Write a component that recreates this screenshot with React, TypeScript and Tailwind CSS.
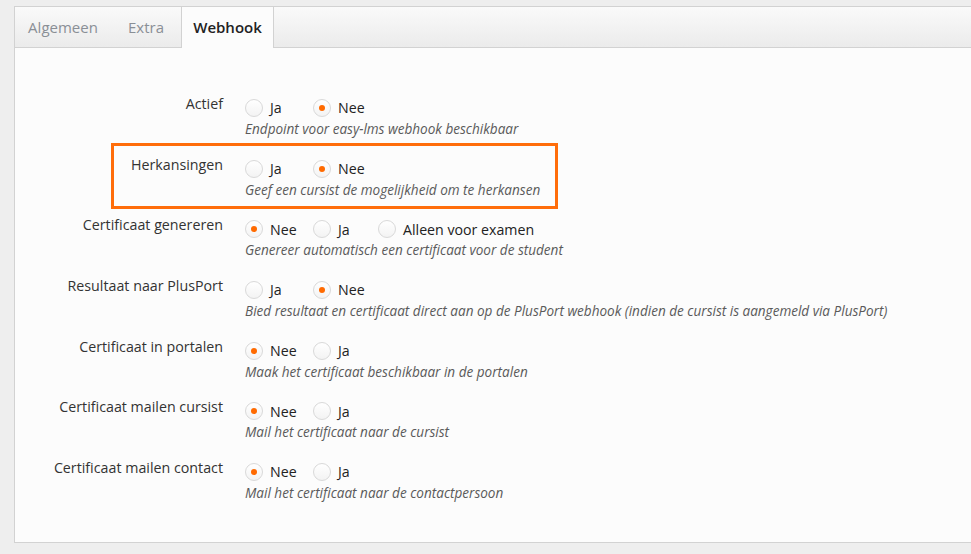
import { JSX } from "react";

type Opt = { label: string; checked?: boolean; w: string };

const rows: { label: string; options: Opt[]; help: string; highlight?: boolean }[] = [
    {
        label: "Actief",
        options: [{ label: "Ja", w: "w-[68px]" }, { label: "Nee", checked: true, w: "w-[68px]" }],
        help: "Endpoint voor easy-lms webhook beschikbaar",
    },
    {
        label: "Herkansingen",
        options: [{ label: "Ja", w: "w-[68px]" }, { label: "Nee", checked: true, w: "w-[68px]" }],
        help: "Geef een cursist de mogelijkheid om te herkansen",
        highlight: true,
    },
    {
        label: "Certificaat genereren",
        options: [
            { label: "Nee", checked: true, w: "w-[68px]" },
            { label: "Ja", w: "w-[65px]" },
            { label: "Alleen voor examen", w: "w-[170px]" },
        ],
        help: "Genereer automatisch een certificaat voor de student",
    },
    {
        label: "Resultaat naar PlusPort",
        options: [{ label: "Ja", w: "w-[68px]" }, { label: "Nee", checked: true, w: "w-[68px]" }],
        help: "Bied resultaat en certificaat direct aan op de PlusPort webhook (indien de cursist is aangemeld via PlusPort)",
    },
    {
        label: "Certificaat in portalen",
        options: [{ label: "Nee", checked: true, w: "w-[68px]" }, { label: "Ja", w: "w-[68px]" }],
        help: "Maak het certificaat beschikbaar in de portalen",
    },
    {
        label: "Certificaat mailen cursist",
        options: [{ label: "Nee", checked: true, w: "w-[68px]" }, { label: "Ja", w: "w-[68px]" }],
        help: "Mail het certificaat naar de cursist",
    },
    {
        label: "Certificaat mailen contact",
        options: [{ label: "Nee", checked: true, w: "w-[68px]" }, { label: "Ja", w: "w-[68px]" }],
        help: "Mail het certificaat naar de contactpersoon",
    },
];

export default function App(): JSX.Element {
    return (
        <div className="w-[971px] h-[554px] bg-[#eeeeee] pt-[6px] pl-[14px] overflow-hidden font-['Open_Sans',sans-serif]">
            <div className="h-[537px] bg-[#fcfcfc] border border-r-0 border-[#d2d2d2] flex flex-col">
                <div className="h-[41px] flex bg-gradient-to-b from-[#fafafa] to-[#ebebeb] border-b border-[#d2d2d2] text-[15px]">
                    <Tab label="Algemeen" w="w-[98px]" />
                    <Tab label="Extra" w="w-[68px]" />
                    <div className="w-[93px] h-[41px] -mb-px bg-[#fcfcfc] border-x border-[#d2d2d2] flex items-center justify-center font-semibold text-[#222]">
                        Webhook
                    </div>
                </div>
                <div className="pt-[46px]">
                    {rows.map((r) => (
                        <Row key={r.label} {...r} />
                    ))}
                </div>
            </div>
        </div>
    );
}

function Tab({ label, w }: { label: string; w: string }) {
    return <div className={`${w} flex items-center justify-center pr-[2px] text-[#8a8f96]`}>{label}</div>;
}

function Row({ label, options, help, highlight }: { label: string; options: Opt[]; help: string; highlight?: boolean }) {
    return (
        <div className="relative flex h-[60.7px]">
            {highlight && (
                <div className="absolute left-[96px] top-[-12px] w-[447px] h-[66px] border-[3px] border-[#ff6d0a] pointer-events-none" />
            )}
            <div className="w-[208px] text-right text-[14.25px] leading-5 text-[#333]">{label}</div>
            <div className="ml-[22px] pt-[4px]">
                <div className="flex h-5 items-center">
                    {options.map((o) => (
                        <label key={o.label} className={`${o.w} flex items-center gap-[7px] text-[14.2px] text-[#222]`}>
                            <Radio checked={o.checked} />
                            <span>{o.label}</span>
                        </label>
                    ))}
                </div>
                <div className="mt-[2px] text-[13.55px] leading-[18px] italic text-[#5a5a5a] whitespace-nowrap">{help}</div>
            </div>
        </div>
    );
}

function Radio({ checked }: { checked?: boolean }) {
    return (
        <span className="w-[18px] h-[18px] rounded-full border border-[#d9d9d9] bg-gradient-to-b from-white to-[#f3f3f3] flex items-center justify-center shrink-0">
            {checked && <span className="w-[6px] h-[6px] rounded-full bg-[#ff6a00]" />}
        </span>
    );
}
